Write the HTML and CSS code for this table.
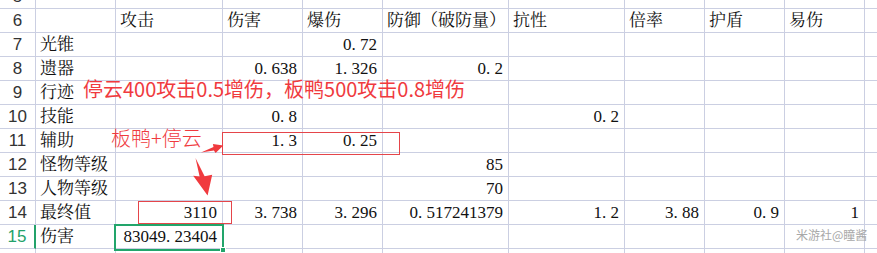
FILE: index.html
```html
<!DOCTYPE html>
<html lang="zh-CN">
<head>
<meta charset="utf-8">
<title>伤害计算</title>
<link rel="stylesheet" href="styles.css">
</head>
<body>
<div class="sheet">
  <div class="grid">
    <div class="rh">5</div><div></div><div></div><div></div><div></div><div></div><div></div><div></div><div></div><div></div><div></div>

    <div class="rh">6</div><div></div><div class="t">攻击</div><div class="t">伤害</div><div class="t">爆伤</div><div class="t">防御（破防量）</div><div class="t">抗性</div><div class="t">倍率</div><div class="t">护盾</div><div class="t">易伤</div><div></div>

    <div class="rh">7</div><div class="t">光锥</div><div></div><div></div><div class="n">0<span class="pt">.</span>72</div><div></div><div></div><div></div><div></div><div></div><div></div>

    <div class="rh">8</div><div class="t">遗器</div><div></div><div class="n">0<span class="pt">.</span>638</div><div class="n">1<span class="pt">.</span>326</div><div class="n">0<span class="pt">.</span>2</div><div></div><div></div><div></div><div></div><div></div>

    <div class="rh">9</div><div class="t">行迹</div><div></div><div></div><div></div><div></div><div></div><div></div><div></div><div></div><div></div>

    <div class="rh">10</div><div class="t">技能</div><div></div><div class="n">0<span class="pt">.</span>8</div><div></div><div></div><div class="n">0<span class="pt">.</span>2</div><div></div><div></div><div></div><div></div>

    <div class="rh">11</div><div class="t">辅助</div><div></div><div class="n">1<span class="pt">.</span>3</div><div class="n">0<span class="pt">.</span>25</div><div></div><div></div><div></div><div></div><div></div><div></div>

    <div class="rh">12</div><div class="t">怪物等级</div><div></div><div></div><div></div><div class="n">85</div><div></div><div></div><div></div><div></div><div></div>

    <div class="rh">13</div><div class="t">人物等级</div><div></div><div></div><div></div><div class="n">70</div><div></div><div></div><div></div><div></div><div></div>

    <div class="rh">14</div><div class="t">最终值</div><div class="n">3110</div><div class="n">3<span class="pt">.</span>738</div><div class="n">3<span class="pt">.</span>296</div><div class="n">0<span class="pt">.</span>517241379</div><div class="n">1<span class="pt">.</span>2</div><div class="n">3<span class="pt">.</span>88</div><div class="n">0<span class="pt">.</span>9</div><div class="n">1</div><div></div>

    <div class="rh active">15</div><div class="t">伤害</div><div class="n">83049<span class="pt">.</span>23404</div><div></div><div></div><div></div><div></div><div></div><div></div><div></div><div></div>

    <div class="rh">16</div><div></div><div></div><div></div><div></div><div></div><div></div><div></div><div></div><div></div><div></div>
  </div>

  <div class="selection"><span class="handle"></span></div>
  <div class="mark mark-assist"></div>
  <div class="mark mark-atk"></div>

  <div class="note note-main">停云400攻击0.5增伤，板鸭500攻击0.8增伤</div>
  <div class="note note-pair">板鸭+停云</div>

  <svg class="arrows" width="877" height="253" viewBox="0 0 877 253" aria-hidden="true">
    <polygon points="201,152.6 213.9,150.4 215.6,153 223.3,145.6 212.9,143.9 213.5,146.9" />
    <polygon points="195.5,158 199.6,176.5 193.2,175.8 207.6,195.5 212.2,174.8 204.6,176.2" />
  </svg>

  <div class="watermark">米游社@瞳酱</div>
</div>
</body>
</html>
```

FILE: styles.css
```css
* {
  box-sizing: border-box;
}

html, body {
  margin: 0;
  padding: 0;
  background: #ffffff;
}

body {
  width: 877px;
  height: 253px;
  overflow: hidden;
}

.sheet {
  position: relative;
  width: 877px;
  height: 253px;
  overflow: hidden;
}

.grid {
  display: grid;
  grid-template-columns: 36px 80px 107px 80px 80px 126px 116px 80px 80px 80px 80px;
  grid-auto-rows: 24px;
  margin-top: -15px;
  font-family: "Liberation Serif", "Noto Serif CJK SC", "Noto Sans CJK SC", serif;
  font-size: 17px;
  color: #111111;
}

.grid > div {
  border-right: 1px solid #cbcfe2;
  border-bottom: 1px solid #cbcfe2;
  display: flex;
  align-items: flex-end;
  padding: 0 5px 1px 5px;
  line-height: 20px;
  white-space: nowrap;
  overflow: visible;
}

.grid > .rh {
  justify-content: center;
  align-items: center;
  padding: 0;
  font-family: "Liberation Sans", "Noto Sans", sans-serif;
  font-size: 17px;
  color: #333333;
}

.grid > .rh.active {
  color: #23a26a;
  border-right: 2px solid #23a26a;
}

.grid > .t {
  justify-content: flex-start;
  padding-left: 4px;
}

.grid > .n {
  justify-content: flex-end;
  padding-right: 5px;
}

.pt {
  display: inline-block;
  width: 0.5em;
}

.selection {
  position: absolute;
  left: 114px;
  top: 224px;
  width: 110px;
  height: 27px;
  border: 2px solid #22a56b;
}

.handle {
  position: absolute;
  right: -4px;
  bottom: -4px;
  width: 6px;
  height: 6px;
  background: #22a56b;
  border: 1px solid #ffffff;
}

.mark {
  position: absolute;
  border: 1px solid #e5454a;
}

.mark-assist {
  left: 222px;
  top: 132px;
  width: 178px;
  height: 23px;
}

.mark-atk {
  left: 138px;
  top: 201px;
  width: 94px;
  height: 23px;
}

.note {
  position: absolute;
  font-family: "Noto Sans CJK SC", "Noto Sans", sans-serif;
  color: #f03a3e;
  white-space: nowrap;
}

.note-main {
  left: 83px;
  top: 76px;
  font-size: 20px;
  line-height: 26px;
}

.note-pair {
  left: 111px;
  top: 125px;
  font-size: 20px;
  line-height: 26px;
  font-weight: 300;
}

.arrows {
  position: absolute;
  left: 0;
  top: 0;
}

.arrows polygon {
  fill: #f03a3e;
}

.watermark {
  position: absolute;
  left: 796px;
  top: 227px;
  font-family: "Noto Sans CJK SC", "Noto Sans", sans-serif;
  font-size: 12px;
  line-height: 16px;
  color: #a8a8a8;
  white-space: nowrap;
}
```
